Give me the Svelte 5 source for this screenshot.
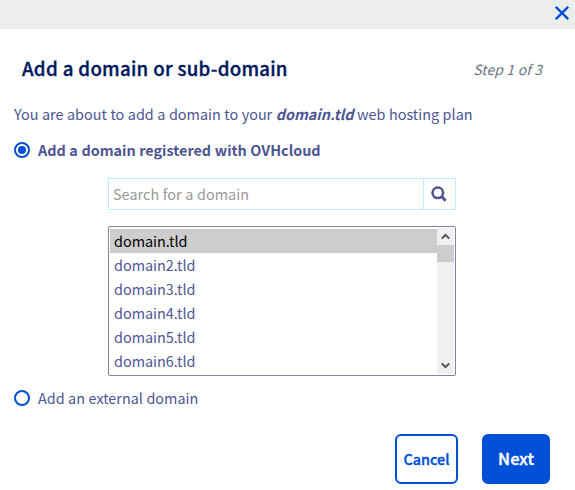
<script>
  const domains = ['domain.tld', 'domain2.tld', 'domain3.tld', 'domain4.tld', 'domain5.tld', 'domain6.tld'];
  let selected = $state('domain.tld');
  let source = $state('ovh');
</script>

<main>
  <div class="bar">
    <button class="close" aria-label="Close">
      <svg width="14" height="14" viewBox="0 0 14 14"><path d="M.8.8l12.4 12.4M13.2.8L.8 13.2" stroke="#0050d7" stroke-width="2.3" /></svg>
    </button>
  </div>
  <header>
    <h1>Add a domain or sub-domain</h1>
    <em class="step">Step 1 of 3</em>
  </header>
  <p class="intro">You are about to add a domain to your <b>domain.tld</b> web hosting plan</p>
  <label class="choice first">
    <input type="radio" value="ovh" bind:group={source} />
    <strong>Add a domain registered with OVHcloud</strong>
  </label>
  <div class="search">
    <div class="field">Search for a domain</div>
    <button class="go" aria-label="Search">
      <svg width="16" height="16" viewBox="0 0 16 16" fill="none" stroke="#4d5592"><circle cx="6.8" cy="6.8" r="5.3" stroke-width="2.5" /><path d="M10.6 10.6l4.1 4.1" stroke-width="2.8" /></svg>
    </button>
  </div>
  <div class="list">
    <div class="options">
      {#each domains as d}
        <button class="option" class:selected={d === selected} onclick={() => (selected = d)}>{d}</button>
      {/each}
    </div>
    <div class="scroll">
      <div class="arrow"><svg width="9" height="7" viewBox="0 0 9 7"><path d="M.7 5.6L4.5 1.8l3.8 3.8" /></svg></div>
      <div class="thumb"></div>
      <div class="arrow down"><svg width="9" height="7" viewBox="0 0 9 7"><path d="M.7 1.4l3.8 3.8 3.8-3.8" /></svg></div>
    </div>
  </div>
  <label class="choice second">
    <input type="radio" value="external" bind:group={source} />
    <span>Add an external domain</span>
  </label>
  <footer>
    <button class="cancel">Cancel</button>
    <button class="next">Next</button>
  </footer>
</main>

<style>
  :global(body) { margin: 0; background: #fff; }
  main {
    box-sizing: border-box; width: 575px; height: 490px; overflow: hidden; background: #fff;
    font: 14.4px/24px "Noto Sans CJK SC", "Noto Sans", sans-serif; word-spacing: .3px; color: #4d5592; white-space: nowrap;
  }
  button { font: inherit; word-spacing: inherit; color: inherit; border: 0; background: none; padding: 0; margin: 0; }
  svg { display: block; }
  .bar { height: 29px; background: #eceeeb; display: flex; justify-content: flex-end; }
  .close { width: 14px; height: 14px; margin: 6px 6px 0 0; }
  header { display: flex; justify-content: space-between; align-items: center; height: 32px; padding: 24px 33px 0 22px; }
  h1 { margin: -2px 0 0; font-size: 18.7px; line-height: 32px; font-weight: 500; letter-spacing: .24px; -webkit-text-stroke: .35px #00185e; color: #00185e; }
  .step { color: #6b7480; font-size: 14px; word-spacing: .4px; }
  .intro { margin: 17px 0 0 14px; height: 24px; }
  .intro b { font-style: italic; }
  .choice { display: flex; align-items: center; gap: 8px; margin-left: 14px; height: 24px; }
  .first { margin-top: 12px; }
  input {
    appearance: none; box-sizing: border-box; width: 16px; height: 16px; margin: 0;
    border: 2px solid #0050d7; border-radius: 50%; display: grid; place-items: center;
  }
  input:checked::before { content: ""; width: 8px; height: 8px; border-radius: 50%; background: #0050d7; }
  .search { box-sizing: border-box; margin: 16px 0 0 108px; width: 348px; height: 32px; border: 1px solid #bef1ff; display: flex; }
  .field { flex: 1; padding-left: 4px; line-height: 30px; color: #999; letter-spacing: .04px; }
  .go { width: 32px; border-left: 1px solid #bef1ff; display: grid; place-items: center; padding-right: 1px; }
  .list {
    box-sizing: border-box; margin: 16px 0 0 108px; width: 348px; height: 150px;
    border: 1px solid #85809c; border-radius: 2px; display: flex; padding: 1px;
  }
  .options { flex: 1; padding-top: 1px; }
  .option { display: block; width: 100%; height: 24px; padding-left: 4px; text-align: left; }
  .selected { background: #cdcdcd; color: #000; }
  .scroll { width: 17px; background: #f0f0f0; display: flex; flex-direction: column; }
  .arrow { height: 17px; display: grid; place-items: center; }
  .arrow path { fill: none; stroke: #505050; stroke-width: 2; }
  .thumb { height: 17px; background: #cdcdcd; }
  .down { margin-top: auto; }
  .second { margin-top: 10px; }
  footer { display: flex; justify-content: flex-end; gap: 24px; margin: 24px 25px 0 0; }
  footer button { box-sizing: border-box; height: 50px; border: 2px solid #0050d7; border-radius: 6px; color: #0050d7; }
  .cancel { width: 63px; font-weight: 500; -webkit-text-stroke: .35px #0050d7; }
  footer .next { width: 68px; background: #0050d7; color: #fff; font-size: 16.4px; font-weight: 500; -webkit-text-stroke: .35px #fff; padding-bottom: 2px; }
</style>
